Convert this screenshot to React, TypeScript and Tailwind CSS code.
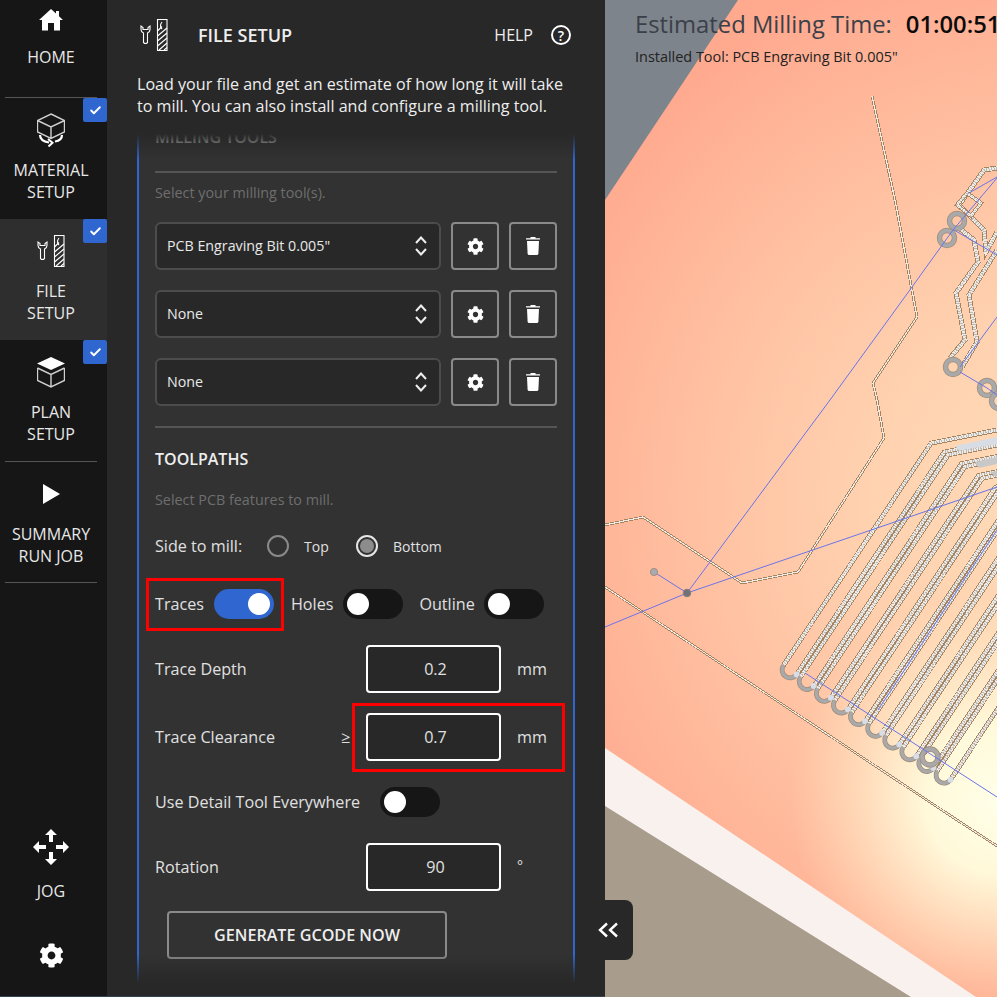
import { Check } from 'lucide-react'
import { FaCog } from 'react-icons/fa'

const ToolIcon = () => (
  <svg width="28" height="32" viewBox="0 0 28 32" fill="none" stroke="#fff" strokeWidth="1.1">
    <path d="M1 7V10.5Q1 13 3.5 14V23.5Q5.5 25.5 7.5 23.5V14Q10 13 10 10.5V7L8 8.5V10.5H3V8.5Z" />
    <rect x="17.5" y="0.5" width="9.5" height="31" />
    <path d="M17.5 12L22 7.5M17.5 17L27 9M17.5 22L27 14M17.5 27L27 19M19 31L27 24M24 31L27 28.5" />
    <path d="M22 3Q19 7 22 10" />
  </svg>
)

const HomeIcon = () => (
  <svg width="24" height="22" viewBox="0 0 24 22" fill="#fff">
    <path d="M12 0L17 4.5V2H20V7.2L24 11H21V21.5H15V14H9V21.5H3V11H0Z" />
  </svg>
)

const MaterialIcon = () => (
  <svg width="28" height="34" viewBox="0 0 28 34" fill="none" stroke="#d0d0d0" strokeWidth="1.4">
    <path d="M14 1L27.5 7.5V19L14 25.5L0.5 19V7.5ZM0.5 7.5L14 14L27.5 7.5M14 14V25.5" />
    <path d="M3 22Q3 28 12 29.5M25 22Q25 27.5 18 28.5" stroke="#fff" strokeWidth="2.2" />
    <path d="M11 26L15.5 29.8L11.5 33.5" stroke="#fff" strokeWidth="2" />
  </svg>
)

const PlanIcon = () => (
  <svg width="28" height="31" viewBox="0 0 28 31" fill="none" stroke="#d0d0d0" strokeWidth="1.4">
    <path d="M14 0L28 6.5L14 13L0 6.5Z" fill="#fff" stroke="none" />
    <path d="M0.5 11V23.5L14 30L27.5 23.5V11M0.5 11L14 17.5L27.5 11M14 17.5V30" />
  </svg>
)

const PlayIcon = () => (
  <svg width="17" height="20" viewBox="0 0 17 20" fill="#fff">
    <path d="M0 0L17 10L0 20Z" />
  </svg>
)

const JogIcon = () => (
  <svg width="36" height="36" viewBox="0 0 36 36" fill="#fff">
    <path d="M18 0L24 6H20V13H16V6H12Z" />
    <path d="M18 36L24 30H20V23H16V30H12Z" />
    <path d="M0 18L6 12V16H13V20H6V24Z" />
    <path d="M36 18L30 12V16H23V20H30V24Z" />
  </svg>
)

const TrashIcon = () => (
  <svg width="14" height="18" viewBox="0 0 14 18" fill="#fff">
    <path d="M4.5 0H9.5V1.2H14V2.6H0V1.2H4.5Z" />
    <path d="M1 4H13L12.4 16.4Q12.2 18 10.8 18H3.2Q1.8 18 1.6 16.4Z" />
  </svg>
)

const Chevrons = () => (
  <svg width="12" height="20" viewBox="0 0 12 20" fill="none" stroke="#eee" strokeWidth="2">
    <path d="M1 7L6 1.5L11 7M1 13L6 18.5L11 13" />
  </svg>
)

const Divider = ({ className }: { className: string }) => <div className={`h-[2px] bg-[#555] ${className}`} />

const Badge = () => (
  <div className="absolute right-0 top-0 flex h-6 w-6 items-center justify-center rounded-[2px] bg-[#2f66d0]">
    <Check size={13} strokeWidth={3.5} color="#fff" />
  </div>
)

const NavItem = ({ icon, lines, done, active }: { icon: React.ReactNode; lines: string[]; done?: boolean; active?: boolean }) => (
  <div className={`relative flex h-[121px] flex-col items-center pr-[5px] pt-4 ${active ? 'bg-[#2e2e2e]' : ''}`}>
    {done && <Badge />}
    <div className="flex h-8 items-center justify-center">{icon}</div>
    <div className="mt-[13px] text-center text-[16px] leading-[22px] text-[#e8e8e8]">
      {lines.map(l => (
        <div key={l}>{l}</div>
      ))}
    </div>
  </div>
)

const NavRule = () => <div className="mx-[5px] h-px w-[92px] bg-[#555]" />

const Sidebar = () => (
  <aside className="flex w-[107px] shrink-0 flex-col bg-[#161616]">
    <div className="flex h-[97px] flex-col items-center pr-[5px] pt-[9px]">
      <HomeIcon />
      <div className="mt-[15px] text-[16px] leading-[22px] text-[#e8e8e8]">HOME</div>
    </div>
    <NavRule />
    <NavItem icon={<MaterialIcon />} lines={['MATERIAL', 'SETUP']} done />
    <NavItem icon={<ToolIcon />} lines={['FILE', 'SETUP']} done active />
    <NavItem icon={<PlanIcon />} lines={['PLAN', 'SETUP']} done />
    <NavRule />
    <div className="flex h-[120px] flex-col items-center pr-[5px] pt-4">
      <div className="flex h-8 items-center justify-center">
        <PlayIcon />
      </div>
      <div className="mt-[13px] text-center text-[16px] leading-[22px] text-[#e8e8e8]">
        <div>SUMMARY</div>
        <div>RUN JOB</div>
      </div>
    </div>
    <NavRule />
    <div className="mt-auto flex flex-col items-center pb-[28px] pr-[5px]">
      <JogIcon />
      <div className="mt-[15px] text-[16px] leading-[22px] text-[#e8e8e8]">JOG</div>
      <div className="mt-[41px]">
        <FaCog size={25} color="#fff" />
      </div>
    </div>
  </aside>
)

const ToolRow = ({ name }: { name: string }) => (
  <div className="flex h-12 gap-[10px]">
    <div className="flex w-[286px] items-center justify-between rounded-md border-2 border-[#4c4c4c] bg-[#282828] pl-[10px] pr-3 text-[14.25px] text-[#e8e8e8]">
      <span>{name}</span>
      <Chevrons />
    </div>
    <div className="flex w-12 items-center justify-center rounded border-2 border-[#8a8a8a]">
      <FaCog size={17} color="#fff" />
    </div>
    <div className="flex w-12 items-center justify-center rounded border-2 border-[#8a8a8a]">
      <TrashIcon />
    </div>
  </div>
)

const Toggle = ({ on, className }: { on?: boolean; className: string }) => (
  <div className={`flex h-[30px] w-[60px] shrink-0 items-center rounded-full px-1 ${on ? 'justify-end bg-[#2f66d0]' : 'bg-[#161616]'} ${className}`}>
    <div className="h-[22px] w-[22px] rounded-full bg-white" />
  </div>
)

const NumberRow = ({ label, symbol, value, unit, className }: { label: string; symbol?: string; value: string; unit: string; className: string }) => (
  <div className={`flex h-12 items-center text-[16.15px] text-[#e0e0e0] ${className}`}>
    <div className="w-[186px]">{label}</div>
    <div className="w-[25px]">{symbol}</div>
    <div className="flex h-12 w-[135px] items-center justify-center rounded border-2 border-white bg-[#282828] pl-1">{value}</div>
    <div className={`ml-4 ${unit === '°' ? '-mt-1 text-[14px]' : ''}`}>{unit}</div>
  </div>
)

const Panel = () => (
  <section className="relative flex w-[498px] shrink-0 flex-col bg-[#282828]">
    <header className="flex h-[70px] items-center pl-[33px] pr-[34px] text-[#eee]">
      <ToolIcon />
      <div className="ml-[30px] text-[18px] font-semibold">FILE SETUP</div>
      <div className="ml-auto text-[16px]">HELP</div>
      <div className="ml-[18px] flex h-5 w-5 items-center justify-center rounded-full border-2 border-white text-[14px] font-semibold text-white">?</div>
    </header>
    <p className="mt-[3px] whitespace-nowrap px-[30px] text-[16.1px] leading-[22px] text-[#eee]">
      Load your file and get an estimate of how long it will take
      <br />
      to mill. You can also install and configure a milling tool.
    </p>
    <div className="relative mt-[17px] min-h-0 flex-1 overflow-hidden px-[30px]">
      <div className="h-full border-x-2 border-[#2f66d0] bg-[#323232] px-4">
        <div className="-mt-[7px] text-[16px] font-semibold leading-5 text-[#eee]">MILLING TOOLS</div>
        <Divider className="mt-6" />
        <div className="mt-[10px] text-[14.35px] leading-5 text-[#6e6e6e]">Select your milling tool(s).</div>
        <div className="mt-[19px] flex flex-col gap-5">
          <ToolRow name={'PCB Engraving Bit 0.005"'} />
          <ToolRow name="None" />
          <ToolRow name="None" />
        </div>
        <Divider className="mt-5" />
        <div className="mt-[21px] text-[16px] font-semibold leading-5 text-[#eee]">TOOLPATHS</div>
        <div className="mt-[21px] text-[14.35px] leading-5 text-[#6e6e6e]">Select PCB features to mill.</div>
        <div className="mt-6 flex h-6 items-center text-[#e0e0e0]">
          <div className="w-[112px] text-[16.15px]">Side to mill:</div>
          <div className="h-[22px] w-[22px] rounded-full border-2 border-[#8a8a8a]" />
          <div className="ml-[15px] w-[52px] text-[14px]">Top</div>
          <div className="flex h-[22px] w-[22px] items-center justify-center rounded-full border-2 border-[#e6e6e6]">
            <div className="h-[14px] w-[14px] rounded-full bg-[#8c8c8c]" />
          </div>
          <div className="ml-[15px] text-[14px]">Bottom</div>
        </div>
        <div className="mt-[31px] flex h-[30px] items-center text-[16.15px] text-[#e0e0e0]">
          <span>Traces</span>
          <Toggle on className="ml-[10px]" />
          <span className="ml-[17px]">Holes</span>
          <Toggle className="ml-[10px]" />
          <span className="ml-4">Outline</span>
          <Toggle className="ml-[9px]" />
        </div>
        <NumberRow className="mt-[26px]" label="Trace Depth" value="0.2" unit="mm" />
        <NumberRow className="mt-5" label="Trace Clearance" symbol="≥" value="0.7" unit="mm" />
        <div className="mt-[26px] flex h-[30px] items-center text-[16.15px] text-[#e0e0e0]">
          <span>Use Detail Tool Everywhere</span>
          <Toggle className="ml-5" />
        </div>
        <NumberRow className="mt-[26px]" label="Rotation" value="90" unit="°" />
        <div className="ml-3 mt-5 flex h-12 w-[280px] items-center justify-center rounded border-2 border-[#8a8a8a] text-[16.15px] font-semibold text-[#eee]">
          GENERATE GCODE NOW
        </div>
      </div>
      <div className="absolute inset-x-0 top-0 h-[26px] bg-gradient-to-b from-[#282828] to-transparent" />
      <div className="absolute inset-x-0 bottom-0 h-[42px] bg-gradient-to-b from-transparent via-[#282828] via-70% to-[#282828]" />
    </div>
    <div className="absolute left-[39px] top-[578px] h-[53px] w-[138px] border-[3px] border-[#f00]" />
    <div className="absolute left-[245px] top-[703px] h-[69px] w-[213px] border-[3px] border-[#f00]" />
  </section>
)

const Trace = ({ points, width = 3 }: { points: string; width?: number }) => (
  <g fill="none" shapeRendering="crispEdges">
    <polyline points={points} stroke="#a5835f" strokeWidth={width} />
    <polyline points={points} stroke="#eeeae5" strokeWidth={width - 1.6} />
    {width > 3 && <polyline points={points} stroke="#bcb9b4" strokeWidth={width - 2} strokeDasharray="1 1.5" />}
  </g>
)

const Ring = ({ x, y, r = 7.5 }: { x: number; y: number; r?: number }) => (
  <g fill="none">
    <circle cx={x} cy={y} r={r} stroke="#9c8a78" strokeWidth={5.4} />
    <circle cx={x} cy={y} r={r} stroke="#a9a9a9" strokeWidth={4} />
  </g>
)

// comb of U shaped traces, pitch measured off the picture
const LEG = { x: 0.553, y: -0.833 }
const PERP = { x: 0.833, y: 0.553 }
const combs = Array.from({ length: 10 }, (_, i) => ({ x: 185 + 17.1 * i, y: 670 + 11.7 * i }))

const Comb = () => (
  <g>
    {combs.map((c, i) =>
      [-8, 8].map(off => {
        const sx = c.x + PERP.x * off
        const sy = c.y + PERP.y * off
        const ex = sx + LEG.x * 267
        const ey = sy + LEG.y * 267
        return <Trace key={`${i}${off}`} width={4.8} points={`${sx},${sy} ${ex},${ey} ${ex + 120},${ey - 24}`} />
      })
    )}
    <path d="M350 446L392 437V444L354 451Z" fill="#d8dce4" />
    <path d="M370 462L392 457V464L374 468Z" fill="#c8c8c8" />
    <path d="M386 472L392 471V476L389 476Z" fill="#c4c4c4" />
    {combs.map((c, i) => {
      const lx = c.x - PERP.x * 8
      const ly = c.y - PERP.y * 8
      const rx = c.x + PERP.x * 8
      const ry = c.y + PERP.y * 8
      const d = `M${lx} ${ly}A8 8 0 0 0 ${rx} ${ry}`
      return (
        <g key={i} fill="none">
          <path d={d} stroke="#9c8a78" strokeWidth={4.8} />
          <path d={d} stroke="#a9a9a9" strokeWidth={3.4} />
          <circle cx={rx} cy={ry} r={3} fill="#d8dde6" />
        </g>
      )
    })}
    <Ring x={325} y={757} r={8} />
  </g>
)

const Board = () => (
  <svg className="absolute inset-0" width="392" height="997" viewBox="0 0 392 997">
    <defs>
      <radialGradient id="boardBase" gradientUnits="userSpaceOnUse" cx="450" cy="500" r="560">
        <stop offset="0" stopColor="#ffdcb8" />
        <stop offset="0.32" stopColor="#ffd2b0" />
        <stop offset="0.55" stopColor="#ffc6a6" />
        <stop offset="0.9" stopColor="#ffb094" />
        <stop offset="1" stopColor="#ffa98f" />
      </radialGradient>
      <radialGradient id="boardGlow" gradientUnits="userSpaceOnUse" cx="395" cy="800" r="210">
        <stop offset="0" stopColor="#ffffe8" />
        <stop offset="0.35" stopColor="#ffffe0" stopOpacity="0.9" />
        <stop offset="1" stopColor="#ffeec8" stopOpacity="0" />
      </radialGradient>
    </defs>
    <rect width="392" height="997" fill="#7e848c" />
    <path d="M0 740H392V997H0Z" fill="#f9f1ee" />
    <path d="M0 806L306 997H0Z" fill="#a89c8c" />
    <path d="M133 0H392V997H371L0 748V200Z" fill="url(#boardBase)" />
    <path d="M133 0H392V997H371L0 748V200Z" fill="url(#boardGlow)" />
    <Trace width={2.8} points="267,96 290,200 312,317 268,383 272,400 279,438 193,572 137,583 38,517 0,525" />
    <Trace width={2.6} points="0,587 352,820 392,846" />
    <Trace width={5} points="392,168 379,170 354,205 379,230 381,252 392,232" />
    <Trace width={5} points="354,228 369,240 373,262 351,293 360,340 345,358" />
    <Trace width={5} points="392,250 364,295 372,342 357,367" />
    <Trace width={4} points="362,193 352,205 366,216 376,203 362,193" />
    <Ring x={342} y={238} />
    <Ring x={352} y={221} />
    <Ring x={348} y={367} />
    <Ring x={382} y={388} />
    <Ring x={394} y={401} />
    <Comb />
    <g fill="none" stroke="#6a74ea" strokeWidth="1">
      <path d="M225 400L307 287L348 230L392 178" />
      <path d="M349 230L392 255" />
      <path d="M364 193L392 177" />
      <path d="M355 367L392 317" />
      <path d="M355 372L382 388L392 395" />
      <path d="M225 400L82 593L49 572" />
      <path d="M0 627L82 593L392 487" />
      <path d="M200 673L392 797" />
      <path d="M273 710L392 530" />
    </g>
    <circle cx={49} cy={572} r={3.6} fill="#a9abb0" stroke="#a08f7e" />
    <circle cx={82} cy={593} r={3.8} fill="#70727a" stroke="#8d8074" />
  </svg>
)

const Viewport = () => (
  <main className="relative min-w-0 flex-1 overflow-hidden">
    <Board />
    <div className="relative whitespace-nowrap pl-[30px] pt-[8px]">
      <div className="flex h-[34px] items-center text-[23.8px] text-[#3b4048]">
        <span>Estimated Milling Time:</span>
        <span className="ml-[14px] font-semibold text-[#0c0c0c]">01:00:51</span>
      </div>
      <div className="mt-[5px] text-[14.45px] leading-5 text-[#222]">Installed Tool: PCB Engraving Bit 0.005"</div>
    </div>
    <div className="absolute left-0 top-[900px] flex h-[60px] w-7 rounded-r-lg bg-[#282828]" />
  </main>
)

export default function App() {
  return (
    <div className="relative flex h-[997px] w-[997px] overflow-hidden font-['Open_Sans',sans-serif]">
      <div className="flex w-[605px] shrink-0 border-b border-[#34454f]">
        <Sidebar />
        <Panel />
      </div>
      <Viewport />
      <svg className="absolute left-[598px] top-[922px]" width="21" height="16" viewBox="0 0 21 16" fill="none" stroke="#fff" strokeWidth="2.4">
        <path d="M9 1.5L2 8L9 14.5M19 1.5L12 8L19 14.5" />
      </svg>
    </div>
  )
}
